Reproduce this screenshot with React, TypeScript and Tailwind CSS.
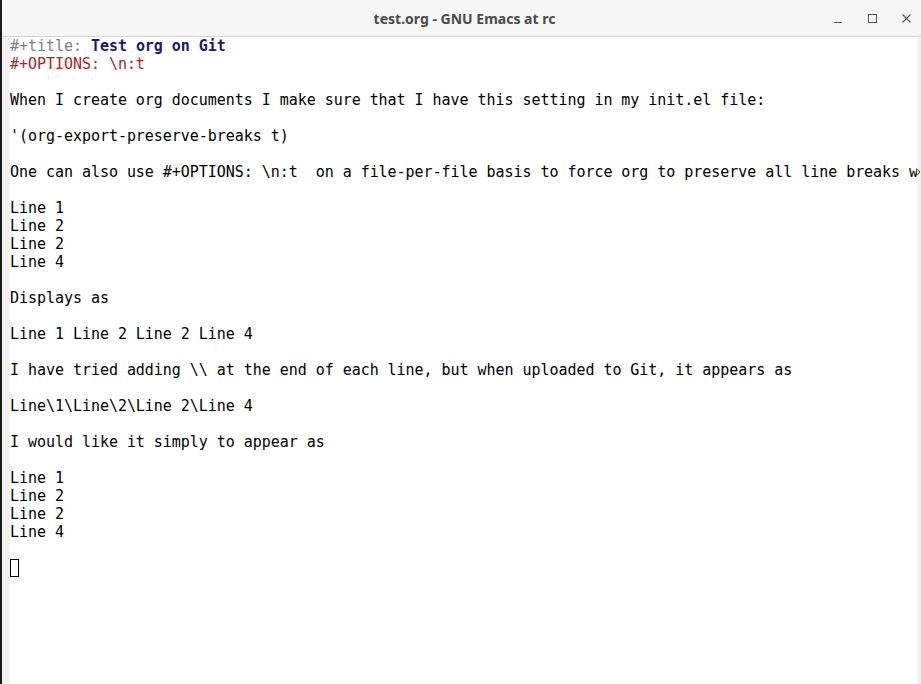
import React from "react";

const lines: React.ReactNode[] = [
  <><span className="text-[#7f7f7f]">#+title: </span><span className="font-bold text-[#191970]">Test org on Git</span></>,
  <span className="text-[#b22222]">#+OPTIONS: \n:t</span>,
  "",
  "When I create org documents I make sure that I have this setting in my init.el file:",
  "",
  "'(org-export-preserve-breaks t)",
  "",
  "One can also use #+OPTIONS: \\n:t  on a file-per-file basis to force org to preserve all line breaks when exporting",
  "",
  "Line 1",
  "Line 2",
  "Line 2",
  "Line 4",
  "",
  "Displays as",
  "",
  "Line 1 Line 2 Line 2 Line 4",
  "",
  "I have tried adding \\\\ at the end of each line, but when uploaded to Git, it appears as",
  "",
  "Line\\1\\Line\\2\\Line 2\\Line 4",
  "",
  "I would like it simply to appear as",
  "",
  "Line 1",
  "Line 2",
  "Line 2",
  "Line 4",
  "",
];

export default function App() {
  return (
    <div className="w-[921px] h-[684px] flex overflow-hidden bg-white">
      <div className="w-[2px] bg-[#1c1c1c] shrink-0" />
      <div className="flex-1 flex flex-col min-w-0">
        <div className="h-[37px] shrink-0 bg-[#f6f6f6] border-b border-[#d3d3d3] flex items-center relative">
          <div className="flex-1 text-center pl-[6px] text-[14px] font-bold text-[#4a4a4a]" style={{ fontFamily: "'Noto Sans', 'Open Sans', sans-serif" }}>
            test.org - GNU Emacs at rc
          </div>
          <div className="absolute right-0 top-0 h-[36px] flex items-center">
            <div className="w-[8px] h-[1px] bg-[#555] mt-[8px] mr-[26px]" />
            <div className="w-[9px] h-[9px] border border-[#555] mr-[25px]" />
            <svg width="9" height="9" viewBox="0 0 9 9" className="mr-[10px]">
              <path d="M0.5 0.5 L8.5 8.5 M8.5 0.5 L0.5 8.5" stroke="#555" strokeWidth="1.1" fill="none" />
            </svg>
          </div>
        </div>
        <div className="flex-1 flex min-h-0">
          <div className="w-[8px] bg-[#f2f2f2] shrink-0" />
          <div
            className="flex-1 min-w-0 overflow-hidden text-[15px] leading-[18px] tracking-[-0.04px] text-black whitespace-pre"
            style={{ fontFamily: "'DejaVu Sans Mono', monospace" }}
          >
            {lines.map((l, i) => (
              <div key={i} className="h-[18px]">{l}</div>
            ))}
            <div className="h-[18px]">
              <div className="w-[9px] h-[18px] border border-black" />
            </div>
          </div>
          <div className="w-[4px] bg-[#f2f2f2] shrink-0 relative">
            <svg width="4" height="18" viewBox="0 0 4 18" className="absolute left-0 top-[126px]">
              <path d="M0 6 L3 9 L0 12" stroke="#333" strokeWidth="1" fill="none" />
            </svg>
          </div>
        </div>
      </div>
    </div>
  );
}
